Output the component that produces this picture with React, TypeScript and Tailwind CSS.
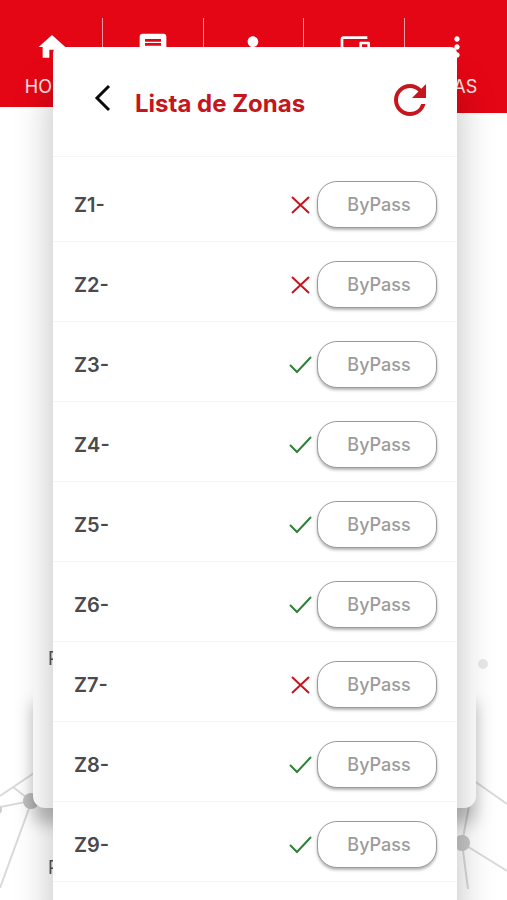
import { MdDevices, MdHome, MdMessage, MdMoreVert, MdPerson, MdRefresh } from "react-icons/md";

const zones = [
  { id: 1, closed: false },
  { id: 2, closed: false },
  { id: 3, closed: true },
  { id: 4, closed: true },
  { id: 5, closed: true },
  { id: 6, closed: true },
  { id: 7, closed: false },
  { id: 8, closed: true },
  { id: 9, closed: true },
];

function NavDivider() {
  return (
    <div className="h-[113px] bg-[#e50615] pt-[18px]">
      <div className="h-[95px] w-px bg-white/60" />
    </div>
  );
}

function NavBar() {
  const item =
    "flex flex-1 flex-col items-center bg-[#e50615] pt-[31px] text-lg leading-6 text-white/90";

  return (
    <nav className="flex items-start bg-white">
      <a href="#home" className={`${item} h-[107px] pl-[2px]`}>
        <MdHome className="size-8 text-white" />
        <span className="mt-3">HOME</span>
      </a>
      <NavDivider />
      <a href="#messages" aria-label="Mensajes" className={`${item} h-[113px]`}>
        <MdMessage className="size-8 text-white" />
      </a>
      <NavDivider />
      <a href="#user" aria-label="Usuario" className={`${item} h-[113px]`}>
        <MdPerson className="size-8 text-white" />
      </a>
      <NavDivider />
      <a href="#devices" aria-label="Dispositivos" className={`${item} h-[113px]`}>
        <MdDevices className="size-8 text-white" />
      </a>
      <NavDivider />
      <a href="#more" className={`${item} h-[113px] pl-[2px]`}>
        <MdMoreVert className="size-8 text-white" />
        <span className="mt-3">MAS</span>
      </a>
    </nav>
  );
}

// Grey network drawing in the bottom corners
function Network() {
  return (
    <div className="pointer-events-none absolute inset-x-0 bottom-0 flex justify-between">
      <svg width="60" height="260" viewBox="0 640 60 260" fill="none" stroke="#dadada" strokeWidth="2">
        <path d="M0 796L40 769M13 787L31 801L0 807M31 803L0 888" />
        <circle cx="31" cy="801" r="8" fill="#c2c2c2" stroke="none" />
        <circle cx="-2" cy="810" r="4" fill="#cccccc" stroke="none" />
      </svg>
      <svg width="60" height="260" viewBox="447 640 60 260" fill="none" stroke="#dadada" strokeWidth="2">
        <path d="M470 778L507 804M469 806L462 843L468 889M462 843L507 871" />
        <circle cx="462" cy="843" r="8" fill="#c8c8c8" stroke="none" />
        <circle cx="483" cy="664" r="5" fill="#e8e8e8" stroke="none" />
      </svg>
    </div>
  );
}

function Backdrop() {
  return (
    <div className="relative col-start-1 row-start-1 flex h-screen flex-col bg-white">
      <Network />
      <NavBar />
      <div className="relative flex flex-1 flex-col justify-end">
        <p className="ml-12 text-lg leading-6 text-[#555]">P</p>
        <div className="mt-4 mr-[31px] ml-[33px] h-[121px] rounded-b-xl bg-white shadow-[0_16px_16px_rgba(0,0,0,0.25)]" />
        <p className="mt-12 mb-5 ml-12 text-lg leading-6 text-[#555]">P</p>
      </div>
    </div>
  );
}

function ZoneStatus({ closed }: { closed: boolean }) {
  return closed ? (
    <svg width="24" height="24" viewBox="0 0 24 24" fill="none" stroke="#2f8136" strokeWidth="2" role="img" aria-label="Cerrada">
      <path d="M1 12L8 19L22 4" />
    </svg>
  ) : (
    <svg width="24" height="24" viewBox="0 0 24 24" fill="none" stroke="#c4161c" strokeWidth="2" role="img" aria-label="Abierta">
      <path d="M3 4L20 20M20 4L3 20" />
    </svg>
  );
}

function ZoneRow({ id, closed }: { id: number; closed: boolean }) {
  return (
    <li className="flex items-center border-b border-[#f6f6f6] pt-[19px] pr-5 pb-[13px] pl-[21px]">
      <span className="flex-1 text-xl font-semibold text-[#4a4a4a]">Z{id}-</span>
      <ZoneStatus closed={closed} />
      <button
        type="button"
        className="ml-1 h-[47px] w-[120px] rounded-[20px] border border-[#9a9a9a] bg-white pl-1 text-lg font-medium text-[#9b9b9b] shadow-[0_2px_3px_rgba(0,0,0,0.3)]"
      >
        ByPass
      </button>
    </li>
  );
}

export default function App() {
  return (
    <div className="grid h-screen overflow-hidden font-['Inter','Liberation_Sans',sans-serif]">
      <Backdrop />
      <main className="relative col-start-1 row-start-1 mt-[47px] mr-[50px] ml-[53px] rounded-t-md bg-white shadow-[0_40px_38px_rgba(0,0,0,0.26)]">
        <header className="flex h-[110px] items-center border-b border-[#f6f6f6] pr-[23px] pl-[38px]">
          <button type="button" aria-label="Volver" className="mb-2">
            <svg width="24" height="32" viewBox="0 0 24 32" fill="none" stroke="#0a0a0a" strokeWidth="3">
              <path d="M18 4L6 16L18 28" />
            </svg>
          </button>
          <h1 className="mt-1 ml-5 flex-1 text-2xl font-bold text-[#c4161c]">Lista de Zonas</h1>
          <button type="button" aria-label="Actualizar" className="mb-1">
            <MdRefresh className="size-12 text-[#c4161c]" />
          </button>
        </header>
        <ul className="pt-[5px]">
          {zones.map((zone) => (
            <ZoneRow key={zone.id} id={zone.id} closed={zone.closed} />
          ))}
        </ul>
      </main>
    </div>
  );
}
